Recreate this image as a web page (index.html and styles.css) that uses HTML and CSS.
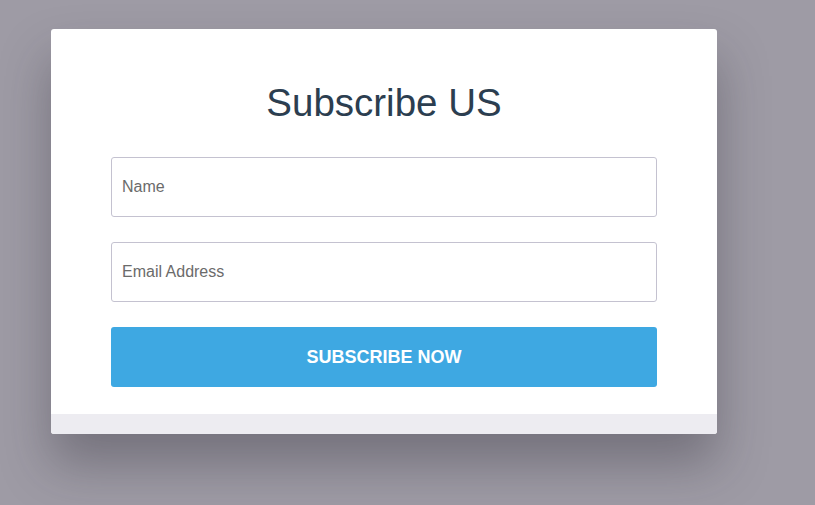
FILE: index.html
```html
<!DOCTYPE html>
<html>
<head>
<meta charset="utf-8">
<link rel="stylesheet" href="styles.css">
</head>
<body>
<div class="card">
  <div class="content">
    <h1 class="title">Subscribe US</h1>
    <form class="form">
      <input class="field" type="text" placeholder="Name">
      <input class="field" type="email" placeholder="Email Address">
      <button class="btn" type="button">Subscribe Now</button>
    </form>
  </div>
  <div class="footer"></div>
</div>
</body>
</html>
```
FILE: styles.css
```css
html, body {
  margin: 0;
  padding: 0;
  height: 100%;
}
body {
  background: #9e9ba5;
  font-family: "Liberation Sans", Arial, sans-serif;
  padding-top: 29px;
  padding-left: 51px;
  box-sizing: border-box;
}
.card {
  width: 666px;
  background: #fff;
  border-radius: 3px;
  overflow: hidden;
  box-shadow: 0 30px 50px rgba(40, 38, 50, 0.35);
}
.content {
  padding: 52px 60px 27px;
}
.title {
  margin: 0 0 32px;
  font-size: 38.5px;
  font-weight: normal;
  line-height: 44px;
  color: #2c3e50;
  text-align: center;
}
.form {
  display: flex;
  flex-direction: column;
  gap: 25px;
  margin: 0;
}
.field {
  box-sizing: border-box;
  height: 60px;
  width: 100%;
  border: 1px solid #c4c2d0;
  border-radius: 3px;
  padding: 0 10px;
  font-family: "Liberation Sans", Arial, sans-serif;
  font-size: 16px;
  color: #333;
  background: #fff;
  outline: none;
}
.field::placeholder {
  color: #6b6b6b;
}
.btn {
  height: 60px;
  width: 100%;
  border: none;
  border-radius: 3px;
  background: #3ea8e2;
  color: #fff;
  font-family: "Liberation Sans", Arial, sans-serif;
  font-size: 18px;
  font-weight: bold;
  text-transform: uppercase;
  cursor: pointer;
}
.footer {
  height: 20px;
  background: #edecf1;
}
```
